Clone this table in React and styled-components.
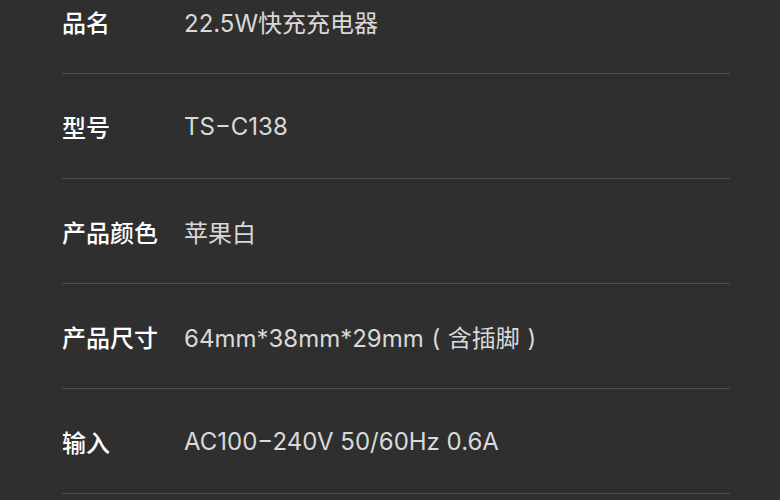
import React from 'react'
import styled, { createGlobalStyle } from 'styled-components'

const specs = [
  { label: '品名', value: '22.5W快充充电器' },
  { label: '型号', value: 'TS−C138' },
  { label: '产品颜色', value: '苹果白' },
  { label: '产品尺寸', value: '64mm*38mm*29mm', note: '含插脚' },
  { label: '输入', value: 'AC100−240V 50/60Hz 0.6A' },
]

const GlobalStyle = createGlobalStyle`
  html, body {
    margin: 0;
    padding: 0;
    background: #2f2f2f;
  }
  body {
    font-family: Inter, 'Noto Sans CJK SC', sans-serif;
  }
`

const Page = styled.div`
  width: 780px;
  height: 500px;
  overflow: hidden;
  background: #2f2f2f;
  padding: 0 50px 0 62px;
  box-sizing: border-box;
`

const SpecList = styled.div`
  display: flex;
  flex-direction: column;
  margin-top: -31px;
`

const Row = styled.div`
  display: flex;
  align-items: center;
  height: 104px;
  border-bottom: 1px solid #4e4e4e;
`

const Label = styled.div`
  width: 122px;
  flex-shrink: 0;
  color: #ffffff;
  font-size: 24px;
  font-weight: 500;
  font-family: 'Noto Sans CJK SC', sans-serif;
`

const Value = styled.div`
  color: #d9d9d9;
  font-size: 24px;
  font-weight: 400;
  font-family: Inter, 'Noto Sans CJK SC', sans-serif;
`

// full-width parens with the glyph centred in its em box
const Paren = styled.span`
  display: inline-block;
  width: 24px;
  text-align: center;
`

const App = () => (
  <Page>
    <GlobalStyle />
    <SpecList>
      {specs.map(s => (
        <Row key={s.label}>
          <Label>{s.label}</Label>
          <Value>
            {s.value}
            {s.note && (
              <>
                <Paren>(</Paren>
                {s.note}
                <Paren>)</Paren>
              </>
            )}
          </Value>
        </Row>
      ))}
    </SpecList>
  </Page>
)

export default App
